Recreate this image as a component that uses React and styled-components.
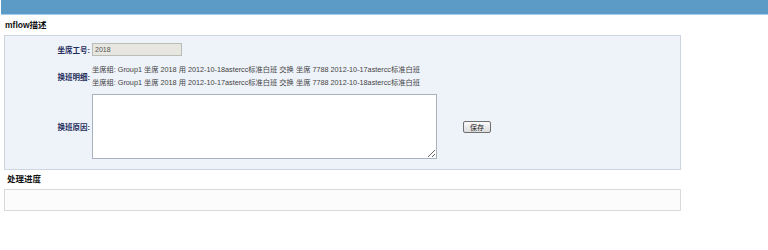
import styled, { createGlobalStyle } from "styled-components"

const GlobalStyle = createGlobalStyle`
    html, body {
        margin: 0;
        padding: 0;
        background: #ffffff;
        font-family: "Liberation Sans", "Noto Sans CJK SC", sans-serif;
    }
`

const details = [
    "坐席组: Group1  坐席 2018 用 2012-10-18astercc标准白班  交换  坐席 7788 2012-10-17astercc标准白班",
    "坐席组: Group1  坐席 2018 用 2012-10-17astercc标准白班  交换  坐席 7788 2012-10-18astercc标准白班",
]

const App = () => {
    return (
        <Page>
            <GlobalStyle />
            <TopBar />
            <Wrapper>
                <SectionTitle>mflow描述</SectionTitle>
                <Panel>
                    <Row>
                        <Label>坐席工号:</Label>
                        <ReadOnlyInput value="2018" readOnly />
                    </Row>
                    <Row $gap={7}>
                        <Label>换班明细:</Label>
                        <div>
                            {details.map((d, i) => (
                                <DetailLine key={i}>{d}</DetailLine>
                            ))}
                        </div>
                    </Row>
                    <Row $gap={5}>
                        <Label>换班原因:</Label>
                        <ReasonBox>
                            <Reason />
                            <SaveButton>保存</SaveButton>
                        </ReasonBox>
                    </Row>
                </Panel>
                <SectionTitle $small>处理进度</SectionTitle>
                <ProgressBox />
            </Wrapper>
        </Page>
    )
}

export default App

const Page = styled.div`
    width: 768px;
    height: 250px;
    background: #ffffff;
`

const TopBar = styled.div`
    height: 14px;
    margin-left: 1px;
    background: #5b9bc6;
    border-bottom: 1px solid #a3cdea;
`

const Wrapper = styled.div`
    width: 677px;
    padding-left: 4px;
`

const SectionTitle = styled.div`
    font-size: 8.5px;
    font-weight: bold;
    color: #111111;
    height: ${p => (p.$small ? "19px" : "20px")};
    line-height: ${p => (p.$small ? "18px" : "20px")};
    padding-left: ${p => (p.$small ? "3px" : "1px")};
`

const Panel = styled.div`
    background: #eef2f9;
    border: 1px solid #cdd5e1;
    padding: 7px 0 10px;
`

const Row = styled.div`
    display: grid;
    grid-template-columns: 85px 1fr;
    column-gap: 2px;
    align-items: center;
    margin-top: ${p => (p.$gap ? `${p.$gap}px` : "0")};
`

const Label = styled.div`
    text-align: right;
    font-size: 7.5px;
    font-weight: bold;
    color: #1e2d5c;
`

const ReadOnlyInput = styled.input`
    box-sizing: border-box;
    width: 90px;
    height: 13px;
    padding: 0 2px;
    font-family: inherit;
    font-size: 7px;
    color: #555555;
    background: #e7e7e0;
    border: 1px solid #b9bdb8;
    outline: none;
`

const DetailLine = styled.div`
    font-size: 7.25px;
    line-height: 13px;
    color: #444444;
    white-space: nowrap;
`

const ReasonBox = styled.div`
    display: flex;
    align-items: center;
    gap: 26px;
`

const Reason = styled.textarea`
    box-sizing: border-box;
    width: 345px;
    height: 65px;
    margin: 0;
    background: #ffffff;
    border: 1px solid #aab2bd;
`

const SaveButton = styled.button`
    width: 28px;
    height: 12px;
    padding: 0;
    font-family: inherit;
    font-size: 7px;
    color: #222222;
    background: linear-gradient(#fafafa, #dcdcdc);
    border: 1px solid #707070;
    border-radius: 2px;
`

const ProgressBox = styled.div`
    height: 20px;
    background: #fcfcfc;
    border: 1px solid #d9d9d9;
`
